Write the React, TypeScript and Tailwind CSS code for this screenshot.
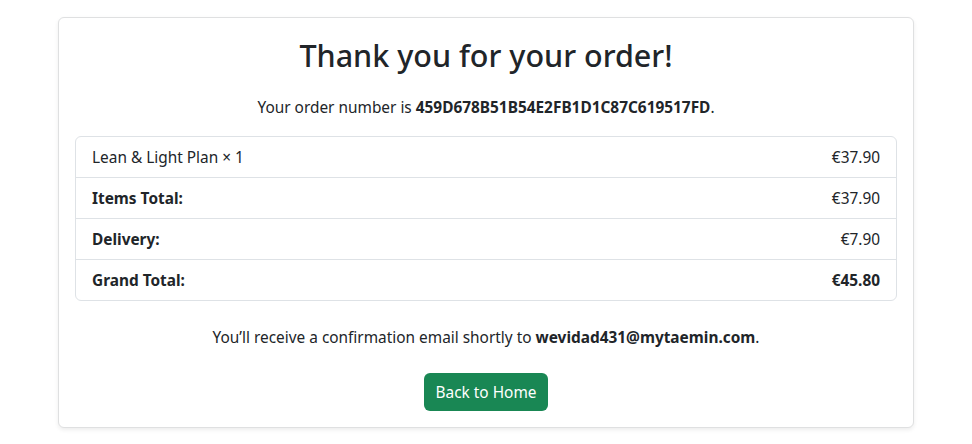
import React from "react";

const rows = [
  { label: "Lean & Light Plan × 1", value: "€37.90", bold: false, strongValue: false },
  { label: "Items Total:", value: "€37.90", bold: true, strongValue: false },
  { label: "Delivery:", value: "€7.90", bold: true, strongValue: false },
  { label: "Grand Total:", value: "€45.80", bold: true, strongValue: true },
];

const App: React.FC = () => {
  return (
    <div className="min-h-screen bg-white text-[#212529] font-['Noto_Sans',sans-serif] text-[15.4px] leading-[24px]">
      <div className="pt-[17px]">
        <div className="mx-auto w-[856px] rounded-[6px] border border-[#dfe0e1] bg-white p-4 shadow-[0_2px_4px_rgba(0,0,0,0.075)] text-center">
          {/* Titre */}
          <h1 className="text-[30.5px] font-medium leading-[42px] mb-[20px]">Thank you for your order!</h1>

          <p className="mb-[16px]">
            Your order number is <strong className="font-bold">459D678B51B54E2FB1D1C87C619517FD</strong>.
          </p>

          {/* Récapitulatif */}
          <ul className="rounded-[6px] border border-[#dee2e6] text-left">
            {rows.map((r, i) => (
              <li
                key={r.label}
                className={`flex justify-between px-4 pt-[9px] pb-[7px] ${i > 0 ? "border-t border-[#dee2e6]" : ""}`}
              >
                <span className={r.bold ? "font-bold" : ""}>{r.label}</span>
                <span className={r.strongValue ? "font-bold" : ""}>{r.value}</span>
              </li>
            ))}
          </ul>

          <p className="mt-[25px] mb-[23px]">
            You’ll receive a confirmation email shortly to <strong className="font-bold">wevidad431@mytaemin.com</strong>.
          </p>

          <button
            type="button"
            className="rounded-[6px] bg-[#198754] px-3 pt-[8px] pb-[6px] text-white leading-[24px]"
          >
            Back to Home
          </button>
        </div>
      </div>
    </div>
  );
};

export default App;
